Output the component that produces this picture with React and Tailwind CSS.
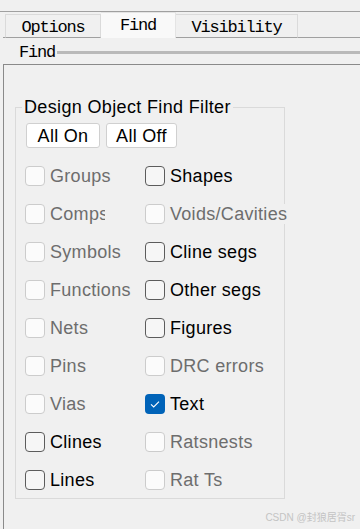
import { Fragment } from 'react'

const rows = [
  [{ label: 'Groups', state: 'disabled' }, { label: 'Shapes', state: 'off' }],
  [{ label: 'Comps', state: 'disabled', clip: true }, { label: 'Voids/Cavities', state: 'disabled' }],
  [{ label: 'Symbols', state: 'disabled' }, { label: 'Cline segs', state: 'off' }],
  [{ label: 'Functions', state: 'disabled' }, { label: 'Other segs', state: 'off' }],
  [{ label: 'Nets', state: 'disabled' }, { label: 'Figures', state: 'off' }],
  [{ label: 'Pins', state: 'disabled' }, { label: 'DRC errors', state: 'disabled' }],
  [{ label: 'Vias', state: 'disabled' }, { label: 'Text', state: 'on' }],
  [{ label: 'Clines', state: 'off' }, { label: 'Ratsnests', state: 'disabled' }],
  [{ label: 'Lines', state: 'off' }, { label: 'Rat Ts', state: 'disabled' }],
]

function CheckItem({ label, state, clip }) {
  const disabled = state === 'disabled'
  return (
    <div className="flex items-center h-[20px] gap-[5px]">
      {state === 'on' ? (
        <span className="w-[20px] h-[20px] shrink-0 rounded-[4px] bg-[#0063b8] flex items-center justify-center">
          <svg width="20" height="20" viewBox="0 0 20 20">
            <path d="M6 10.3 L8.7 12.9 L14 7.6" fill="none" stroke="#fff" strokeWidth="1.1" />
          </svg>
        </span>
      ) : (
        <span
          className={
            disabled
              ? 'w-[20px] h-[20px] shrink-0 rounded-[4px] border border-[#cccccc] bg-[#fbfbfb]'
              : 'w-[20px] h-[20px] shrink-0 rounded-[4px] border border-[#5c5c5c] bg-[#f6f6f6]'
          }
        />
      )}
      <span
        className={`text-[18px] leading-[20px] tracking-[0.3px] whitespace-nowrap bg-[#f0f0f0] ${
          disabled ? 'text-[#6d6d6d]' : 'text-black'
        } ${clip ? 'w-[55px] shrink-0 overflow-hidden' : ''}`}
      >
        {label}
      </span>
    </div>
  )
}

export default function App() {
  return (
    <div className="relative w-[360px] h-[529px] overflow-hidden bg-[#f0f0f0] flex flex-col font-['Liberation_Sans',Arial,sans-serif]">
      <div className="h-[11px] shrink-0" />
      <div className="h-px shrink-0 bg-[#a0a0a0]" />

      {/* Tabs */}
      <div className="flex h-[26px] shrink-0 font-['Liberation_Mono','Courier_New',monospace] text-[17px] leading-none tracking-[-1.2px] text-black">
        <div className="ml-[3px] w-[2px] h-px self-end bg-[#a0a0a0]" />
        <div className="w-[96px] h-[24px] self-end flex justify-center pt-[4px] border-t border-l border-r border-[#dadada] border-b border-b-[#a0a0a0]">
          Options
        </div>
        <div className="w-[75px] h-[26px] self-end flex justify-center pt-[4px] bg-[#f9f9f9] border-t border-r border-[#e4e4e4]">
          Find
        </div>
        <div className="w-[122px] h-[24px] self-end flex justify-center pt-[4px] border-t border-r border-[#dadada] border-b border-b-[#a0a0a0]">
          Visibility
        </div>
        <div className="flex-1 h-px self-end bg-[#a0a0a0]" />
      </div>

      {/* Find label with bar */}
      <div className="flex items-start h-[26px] shrink-0 pl-[19px]">
        <span className="mt-[6px] font-['Liberation_Mono','Courier_New',monospace] text-[17px] leading-none tracking-[-1.2px] text-black">
          Find
        </span>
        <div className="flex-1 h-[3px] ml-[2px] mt-[13px] bg-[#b9b9b9]" />
      </div>

      {/* Panel */}
      <div className="flex-1 ml-[3px] border-t border-l border-[#8a8a8a]">
        <fieldset className="ml-[11px] mt-[31px] w-[270px] min-w-0 border border-[#dadada] pb-[8px]">
          <legend className="ml-[6px] px-[2px] text-[18px] leading-[22px] tracking-[0.35px] text-black">
            Design Object Find Filter
          </legend>

          <div className="flex gap-[6px] mt-[5px] pl-[10px]">
            <button className="w-[74px] h-[25px] bg-white border border-[#d0d0d0] rounded-[3px] text-[18px] leading-none tracking-[0.3px] text-black">
              All On
            </button>
            <button className="w-[71px] h-[25px] bg-white border border-[#d0d0d0] rounded-[3px] text-[18px] leading-none tracking-[0.3px] text-black">
              All Off
            </button>
          </div>

          <div className="grid grid-cols-[120px_minmax(0,1fr)] gap-y-[18px] mt-[18px] ml-[9px]">
            {rows.map((pair, i) => (
              <Fragment key={i}>
                <CheckItem {...pair[0]} />
                <CheckItem {...pair[1]} />
              </Fragment>
            ))}
          </div>
        </fieldset>
      </div>

      {/* watermark */}
      <div className="absolute right-[5px] bottom-[6px] text-[10px] leading-none text-[#c4c4c4] font-['Liberation_Sans','Noto_Sans_CJK_SC',sans-serif]">
        CSDN @封狼居胥sr
      </div>
    </div>
  )
}
